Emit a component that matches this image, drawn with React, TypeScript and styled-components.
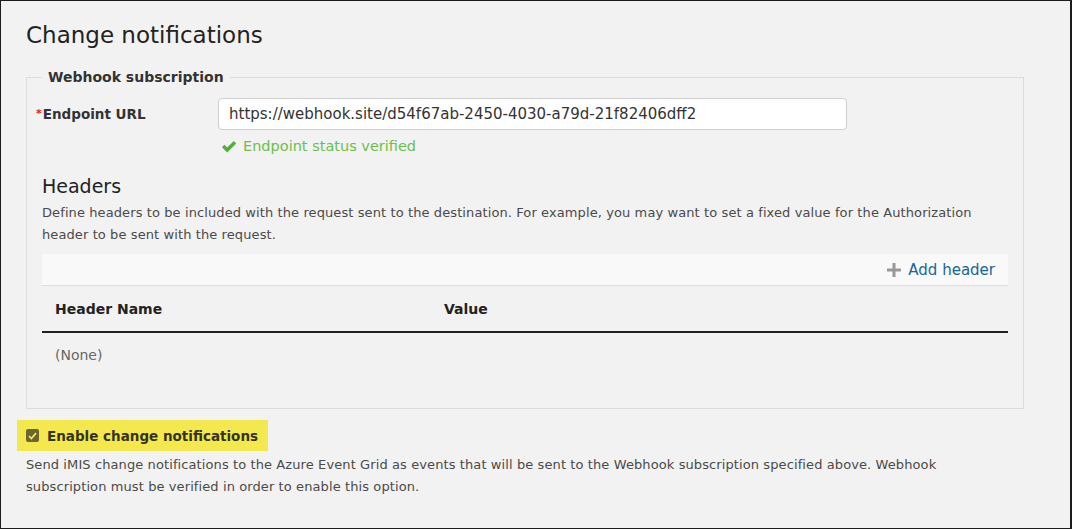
import styled, { createGlobalStyle } from 'styled-components';

const GlobalStyle = createGlobalStyle`
  html, body {
    margin: 0;
    padding: 0;
    background: #f2f2f2;
  }
  body {
    font-family: 'DejaVu Sans', 'Open Sans', sans-serif;
    color: #333;
  }
`;

const Frame = styled.div`
  width: 1072px;
  height: 529px;
  box-sizing: border-box;
  border: 1px solid #1c1c1c;
  border-right-width: 2px;
  background: #f2f2f2;
  padding: 0 46px 0 25px;
  overflow: hidden;
`;

const Title = styled.h1`
  margin: 18px 0 0 0;
  font-size: 23px;
  line-height: 32px;
  font-weight: 400;
  color: #222;
`;

const Fieldset = styled.fieldset`
  margin: 16px 0 0 0;
  padding: 0 15px 31px 15px;
  border: 1px solid #dcdcdc;
  min-width: 0;
`;

const Legend = styled.legend`
  margin-left: 0;
  padding: 0 6px;
  font-size: 14px;
  font-weight: 700;
  color: #333;
  line-height: 20px;
`;

const FieldRow = styled.div`
  display: flex;
  margin: 11px 0 0 -6px;
`;

const Label = styled.label`
  width: 182px;
  flex-shrink: 0;
  font-size: 13.5px;
  font-weight: 700;
  color: #333;
  line-height: 32px;
`;

const Required = styled.span`
  color: #e02020;
  font-size: 11px;
  margin-right: 1px;
  vertical-align: 2px;
`;

const FieldBody = styled.div`
  display: flex;
  flex-direction: column;
`;

const Input = styled.input`
  width: 629px;
  height: 32px;
  box-sizing: border-box;
  border: 1px solid #cfcfcf;
  border-radius: 4px;
  background: #fff;
  padding: 0 10px;
  font-family: inherit;
  font-size: 15px;
  color: #333;
  outline: none;
`;

const Status = styled.div`
  display: flex;
  align-items: center;
  gap: 6px;
  margin: 5px 0 0 3px;
  font-size: 14.5px;
  line-height: 22px;
  color: #6cbf4b;
`;

const Section = styled.div`
  margin-top: 16px;
`;

const SectionTitle = styled.h2`
  margin: 0;
  font-size: 19px;
  font-weight: 400;
  line-height: 26px;
  color: #222;
`;

const Help = styled.p<{ $wide?: boolean }>`
  margin: 3px 0 0 0;
  font-size: 13px;
  line-height: 22px;
  letter-spacing: 0.1px;
  color: #4a4a4a;
  max-width: ${(p) => (p.$wide ? '960px' : 'none')};
`;

const Toolbar = styled.div`
  margin-top: 8px;
  height: 31px;
  background: #f9f9f9;
  border-bottom: 1px solid #dedede;
  display: flex;
  justify-content: flex-end;
  align-items: center;
  padding-right: 13px;
`;

const AddButton = styled.button`
  display: flex;
  align-items: center;
  gap: 7px;
  border: none;
  background: none;
  padding: 0;
  font-family: inherit;
  font-size: 15px;
  color: #17669b;
  cursor: pointer;
`;

const Table = styled.table`
  width: 100%;
  border-collapse: collapse;
`;

const Th = styled.th<{ $width?: number }>`
  text-align: left;
  font-size: 14px;
  font-weight: 600;
  color: #222;
  height: 46px;
  padding: 0 13px;
  border-bottom: 2px solid #222;
  width: ${(p) => (p.$width ? `${p.$width}px` : 'auto')};
  box-sizing: border-box;
`;

const Td = styled.td`
  font-size: 14px;
  color: #666;
  height: 44px;
  padding: 0 13px;
`;

const Highlight = styled.div`
  display: inline-flex;
  align-items: center;
  gap: 8px;
  margin: 11px 0 0 -9px;
  height: 31px;
  padding: 0 10px 0 9px;
  background: #f3e84e;
`;

const Check = styled.span`
  width: 13px;
  height: 13px;
  border-radius: 2px;
  background: #6c6532;
  display: flex;
  align-items: center;
  justify-content: center;
`;

const CheckLabel = styled.span`
  font-size: 13.5px;
  font-weight: 700;
  color: #35331c;
`;

function App() {
  return (
    <>
      <GlobalStyle />
      <Frame>
        <Title>Change notifications</Title>
        <Fieldset>
          <Legend>Webhook subscription</Legend>
          <FieldRow>
            <Label>
              <Required>*</Required>Endpoint URL
            </Label>
            <FieldBody>
              <Input readOnly value="https://webhook.site/d54f67ab-2450-4030-a79d-21f82406dff2" />
              <Status>
                <svg width="16" height="13" viewBox="0 0 16 13">
                  <path d="M1 7.2 L3.4 4.8 L6.2 7.6 L12.8 1 L15.2 3.4 L6.2 12.4 Z" fill="#4fae3c" />
                </svg>
                Endpoint status verified
              </Status>
            </FieldBody>
          </FieldRow>
          <Section>
            <SectionTitle>Headers</SectionTitle>
            <Help>
              Define headers to be included with the request sent to the destination. For example, you may want
              to set a fixed value for the Authorization header to be sent with the request.
            </Help>
            <Toolbar>
              <AddButton>
                <svg width="14" height="14" viewBox="0 0 14 14">
                  <path d="M5.5 0 H8.5 V5.5 H14 V8.5 H8.5 V14 H5.5 V8.5 H0 V5.5 H5.5 Z" fill="#999" />
                </svg>
                Add header
              </AddButton>
            </Toolbar>
            <Table>
              <thead>
                <tr>
                  <Th $width={389}>Header Name</Th>
                  <Th>Value</Th>
                </tr>
              </thead>
              <tbody>
                <tr>
                  <Td colSpan={2}>(None)</Td>
                </tr>
              </tbody>
            </Table>
          </Section>
        </Fieldset>
        <Highlight>
          <Check>
            <svg width="9" height="8" viewBox="0 0 9 8">
              <path d="M1 4.2 L3.4 6.5 L8 1.2" stroke="#f3e84e" strokeWidth="1.8" fill="none" />
            </svg>
          </Check>
          <CheckLabel>Enable change notifications</CheckLabel>
        </Highlight>
        <Help $wide>
          Send iMIS change notifications to the Azure Event Grid as events that will be sent to the Webhook
          subscription specified above. Webhook subscription must be verified in order to enable this option.
        </Help>
      </Frame>
    </>
  );
}

export default App;
